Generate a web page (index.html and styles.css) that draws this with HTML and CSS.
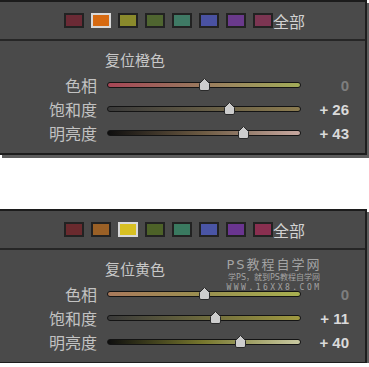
FILE: index.html
```html
<!DOCTYPE html>
<html lang="zh-CN">
<head>
    <meta charset="UTF-8">
    <meta name="viewport" content="width=device-width, initial-scale=1.0">
    <title>HSL 颜色面板</title>
    <link rel="stylesheet" href="styles.css">
</head>
<body>
    <!-- 橙色面板 -->
    <div class="panel">
        <div class="swatches">
            <span class="swatch c-red"></span>
            <span class="swatch c-orange active"></span>
            <span class="swatch c-yellow"></span>
            <span class="swatch c-green"></span>
            <span class="swatch c-aqua"></span>
            <span class="swatch c-blue"></span>
            <span class="swatch c-purple"></span>
            <span class="swatch c-magenta"></span>
            <span class="all">全部</span>
        </div>
        <div class="body">
            <div class="reset">复位橙色</div>
            <div class="row">
                <span class="label">色相</span>
                <div class="track hue-orange"><svg class="thumb" style="left: 50%" width="13" height="13" viewBox="0 0 13 13"><path d="M6.5 0.5 L11.5 5.5 L11.5 11 Q11.5 12.5 10 12.5 L3 12.5 Q1.5 12.5 1.5 11 L1.5 5.5 Z"/></svg></div>
                <span class="value zero">0</span>
            </div>
            <div class="row">
                <span class="label">饱和度</span>
                <div class="track sat-orange"><svg class="thumb" style="left: 63%" width="13" height="13" viewBox="0 0 13 13"><path d="M6.5 0.5 L11.5 5.5 L11.5 11 Q11.5 12.5 10 12.5 L3 12.5 Q1.5 12.5 1.5 11 L1.5 5.5 Z"/></svg></div>
                <span class="value">+ 26</span>
            </div>
            <div class="row">
                <span class="label">明亮度</span>
                <div class="track lum-orange"><svg class="thumb" style="left: 70.5%" width="13" height="13" viewBox="0 0 13 13"><path d="M6.5 0.5 L11.5 5.5 L11.5 11 Q11.5 12.5 10 12.5 L3 12.5 Q1.5 12.5 1.5 11 L1.5 5.5 Z"/></svg></div>
                <span class="value">+ 43</span>
            </div>
        </div>
    </div>

    <!-- 黄色面板 -->
    <div class="panel second">
        <div class="swatches">
            <span class="swatch y-red"></span>
            <span class="swatch y-orange"></span>
            <span class="swatch y-yellow active"></span>
            <span class="swatch y-green"></span>
            <span class="swatch y-aqua"></span>
            <span class="swatch y-blue"></span>
            <span class="swatch y-purple"></span>
            <span class="swatch y-magenta"></span>
            <span class="all">全部</span>
        </div>
        <div class="body">
            <div class="reset">复位黄色</div>
            <div class="row">
                <span class="label">色相</span>
                <div class="track hue-yellow"><svg class="thumb" style="left: 50%" width="13" height="13" viewBox="0 0 13 13"><path d="M6.5 0.5 L11.5 5.5 L11.5 11 Q11.5 12.5 10 12.5 L3 12.5 Q1.5 12.5 1.5 11 L1.5 5.5 Z"/></svg></div>
                <span class="value zero">0</span>
            </div>
            <div class="row">
                <span class="label">饱和度</span>
                <div class="track sat-yellow"><svg class="thumb" style="left: 55.5%" width="13" height="13" viewBox="0 0 13 13"><path d="M6.5 0.5 L11.5 5.5 L11.5 11 Q11.5 12.5 10 12.5 L3 12.5 Q1.5 12.5 1.5 11 L1.5 5.5 Z"/></svg></div>
                <span class="value">+ 11</span>
            </div>
            <div class="row">
                <span class="label">明亮度</span>
                <div class="track lum-yellow"><svg class="thumb" style="left: 69%" width="13" height="13" viewBox="0 0 13 13"><path d="M6.5 0.5 L11.5 5.5 L11.5 11 Q11.5 12.5 10 12.5 L3 12.5 Q1.5 12.5 1.5 11 L1.5 5.5 Z"/></svg></div>
                <span class="value">+ 40</span>
            </div>
        </div>
        <div class="watermark">
            <div class="wm-title">PS教程自学网</div>
            <div class="wm-sub">学PS，就到PS教程自学网</div>
            <div class="wm-url">WWW.16XX8.COM</div>
        </div>
    </div>
</body>
</html>
```

FILE: styles.css
```css
body {
    margin: 0;
    background: #fff;
    font-family: "Noto Sans CJK SC", "Noto Sans", sans-serif;
}
.panel {
    position: relative;
    width: 365px;
    background-color: #4a4a4a;
    border-top: 2px solid #1c1c1c;
    border-right: 2px solid #1e1e1e;
    border-bottom: 2px solid #1c1c1c;
    box-shadow: 2px 3px 0 #5c5c5c;
}
.panel.second {
    margin-top: 54px;
    border-bottom-width: 1px;
}
.swatches {
    display: flex;
    align-items: center;
    height: 37px;
    padding-left: 64px;
    gap: 7px;
    border-bottom: 2px solid #262626;
}
.swatch {
    width: 16px;
    height: 11px;
    border: 2px solid #222;
}
.swatch.active {
    border-color: #d8d8d8;
}
.all {
    margin-left: -7px;
    font-size: 16px;
    line-height: 20px;
    color: #d2d2d2;
}
.c-red { background-color: #6b2a35; }
.c-orange { background-color: #d66a12; }
.c-yellow { background-color: #8a8a2c; }
.c-green { background-color: #4f6530; }
.c-aqua { background-color: #3f7a65; }
.c-blue { background-color: #4a52a2; }
.c-purple { background-color: #6a3a8c; }
.c-magenta { background-color: #7c3552; }
.y-red { background-color: #6a2a2e; }
.y-orange { background-color: #9a6026; }
.y-yellow { background-color: #d8c022; }
.y-green { background-color: #4d6228; }
.y-aqua { background-color: #3a7a60; }
.y-blue { background-color: #4a55a5; }
.y-purple { background-color: #6a3590; }
.y-magenta { background-color: #8a2f50; }
.body {
    padding: 9px 0 8px;
}
.reset {
    padding-left: 105px;
    font-size: 15px;
    line-height: 20px;
    color: #c8c8c8;
    margin-bottom: 3px;
}
.row {
    display: grid;
    grid-template-columns: 97px 194px 38px;
    column-gap: 10px;
    align-items: center;
    height: 24px;
}
.label {
    text-align: right;
    font-size: 16px;
    line-height: 20px;
    color: #c2c2c2;
}
.track {
    position: relative;
    height: 4px;
    border: 1px solid #141414;
    border-radius: 3px;
}
.thumb {
    position: absolute;
    top: -5px;
    margin-left: -6px;
}
.thumb path {
    fill: #cdcdcd;
    stroke: #2a2a2a;
    stroke-width: 1;
}
.value {
    text-align: right;
    font-family: "Liberation Sans", Arial, sans-serif;
    font-size: 15px;
    font-weight: bold;
    color: #dadada;
}
.value.zero {
    color: #7e7e7e;
}
.hue-orange { background: linear-gradient(to right, #a84656, #9a6c5c 35%, #9c8a5e 65%, #a2ac58); }
.sat-orange { background: linear-gradient(to right, #3a3a3a, #8c7c50); }
.lum-orange { background: linear-gradient(to right, #0e0e0e, #6e5c44 50%, #c8a8a0); }
.hue-yellow { background: linear-gradient(to right, #aa7a5c, #9a9050 50%, #a8b050); }
.sat-yellow { background: linear-gradient(to right, #3a3a3a, #a09a40); }
.lum-yellow { background: linear-gradient(to right, #0e0e0e, #78782e 50%, #cacaa2); }
.watermark {
    position: absolute;
    left: 222px;
    top: 46px;
    width: 104px;
    text-align: center;
    font-family: "DejaVu Sans", "Noto Sans CJK SC", sans-serif;
    color: #b4b4b4;
    opacity: 0.85;
}
.wm-title {
    font-size: 13px;
    line-height: 16px;
    letter-spacing: 2px;
}
.wm-sub {
    font-size: 8px;
    line-height: 10px;
}
.wm-url {
    font-family: "DejaVu Sans Mono", monospace;
    font-size: 8px;
    line-height: 10px;
    letter-spacing: 2.5px;
}
```
